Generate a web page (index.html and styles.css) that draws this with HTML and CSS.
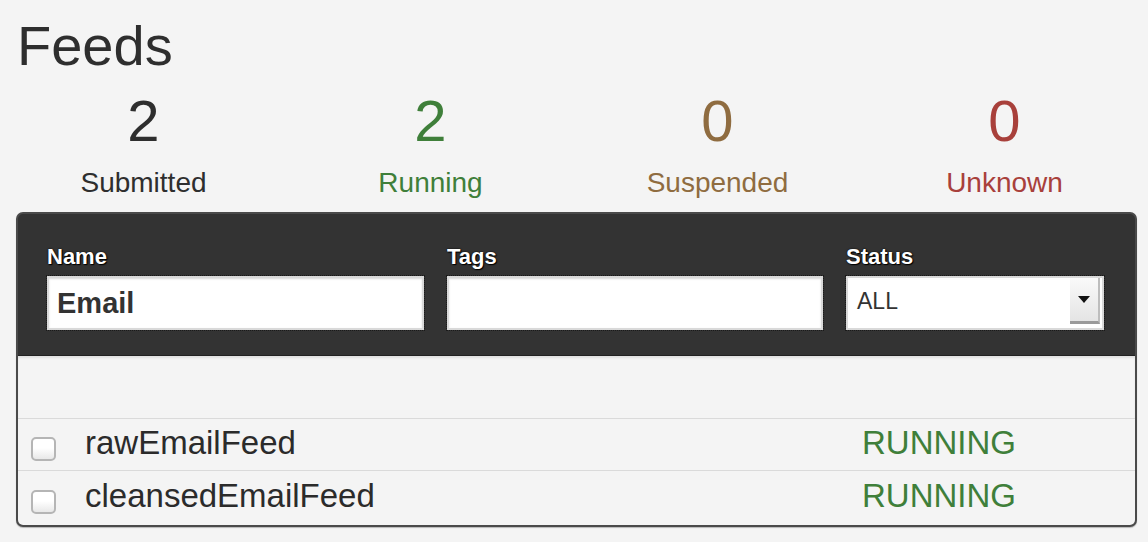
FILE: index.html
```html
<!DOCTYPE html>
<html lang="en">

<head>
	<title>Feeds</title>
	<meta charset="utf-8">
	<link rel="stylesheet" href="styles.css">
</head>

<body>
	<div class="page">
		<h1>Feeds</h1>

		<div class="stats">
			<div class="stat submitted">
				<div class="stat-num">2</div>
				<div class="stat-label">Submitted</div>
			</div>
			<div class="stat running">
				<div class="stat-num">2</div>
				<div class="stat-label">Running</div>
			</div>
			<div class="stat suspended">
				<div class="stat-num">0</div>
				<div class="stat-label">Suspended</div>
			</div>
			<div class="stat unknown">
				<div class="stat-num">0</div>
				<div class="stat-label">Unknown</div>
			</div>
		</div>

		<div class="panel">
			<div class="filters">
				<div class="field">
					<label>Name</label>
					<input class="text-input name-input" type="text" value="Email">
				</div>
				<div class="field">
					<label>Tags</label>
					<input class="text-input" type="text" value="">
				</div>
				<div class="field">
					<label>Status</label>
					<div class="select">
						<span class="select-value">ALL</span>
						<span class="select-arrow"></span>
					</div>
				</div>
			</div>

			<div class="list">
				<div class="list-head"></div>
				<div class="row">
					<span class="check"></span>
					<span class="feed-name">rawEmailFeed</span>
					<span class="feed-status">RUNNING</span>
				</div>
				<div class="row">
					<span class="check"></span>
					<span class="feed-name">cleansedEmailFeed</span>
					<span class="feed-status">RUNNING</span>
				</div>
			</div>
		</div>
	</div>
</body>
</html>
```

FILE: styles.css
```css
* {
	margin: 0;
	box-sizing: border-box;
}

body {
	font-family: 'Liberation Sans', Arial, sans-serif;
	background: #f4f4f4;
	color: #333;
	width: 1148px;
	height: 542px;
	overflow: hidden;
}

.page {
	padding: 0 11px 0 16px;
}

h1 {
	font-size: 56px;
	line-height: 56px;
	font-weight: normal;
	color: #2e2e2e;
	margin-top: 18px;
	margin-left: 1px;
}

.stats {
	display: grid;
	grid-template-columns: repeat(4, 1fr);
	margin: 18px -11px 0 -16px;
	text-align: center;
}

.stat-num {
	font-size: 58px;
	line-height: 58px;
}

.stat-label {
	font-size: 28px;
	line-height: 28px;
	margin-top: 19px;
}

.submitted { color: #2e2e2e; }
.running { color: #3f7f3a; }
.suspended { color: #8f6c40; }
.unknown { color: #a8403b; }

.panel {
	margin-top: 15px;
	width: 1121px;
	border: 2px solid #4a4a4a;
	border-radius: 7px;
	background: #333;
	overflow: hidden;
	box-shadow: 0 1px 1px rgba(0, 0, 0, 0.25);
}

.filters {
	display: grid;
	grid-template-columns: 377px 376px 258px;
	column-gap: 23px;
	padding: 32px 0 25px 29px;
}

.field label {
	display: block;
	font-size: 22px;
	line-height: 22px;
	font-weight: bold;
	color: #fff;
	text-shadow: 0 0 2px #000, 1px 1px 1px #000;
	margin-bottom: 8px;
}

.text-input {
	display: block;
	width: 100%;
	height: 54px;
	border: 2px solid #d9d9d9;
	outline: 1px dotted #1a1a1a;
	background: #fff;
	box-shadow: inset 0 1px 2px rgba(0, 0, 0, 0.15);
	padding: 0 8px;
	font-family: 'Liberation Sans', Arial, sans-serif;
	font-size: 29px;
	color: #333;
}

.name-input {
	font-weight: bold;
}

.select {
	display: flex;
	align-items: center;
	height: 54px;
	border: 2px solid #d9d9d9;
	outline: 1px dotted #1a1a1a;
	background: #fff;
}

.select-value {
	flex: 1;
	padding-left: 9px;
	font-size: 23px;
	margin-top: -3px;
	color: #333;
}

.select-arrow {
	display: flex;
	align-items: center;
	justify-content: center;
	width: 30px;
	height: 46px;
	margin-right: 2px;
	margin-top: -4px;
	background: linear-gradient(#fafafa, #e4e4e4);
	border-bottom: 3px solid #9a9a9a;
	border-right: 2px solid #bdbdbd;
}

.select-arrow::after {
	content: '';
	border-left: 6px solid transparent;
	border-right: 6px solid transparent;
	border-top: 7px solid #111;
}

.list {
	background: #f4f4f4;
	border-top: 1px solid #222;
}

.list-head {
	height: 63px;
	border-bottom: 1px solid #dadada;
	box-shadow: inset 0 2px 2px rgba(0, 0, 0, 0.08);
}

.row {
	display: grid;
	grid-template-columns: 67px 777px 1fr;
	align-items: center;
	height: 52px;
	border-bottom: 1px solid #dadada;
}

.row:last-child {
	border-bottom: none;
	height: 54px;
}

.check {
	display: block;
	width: 25px;
	height: 24px;
	margin: 8px 0 0 13px;
	border: 2px solid #b5b5b5;
	border-radius: 5px;
	background: linear-gradient(#fff, #fff 45%, #e8e8e8);
}

.feed-name {
	font-size: 33px;
	color: #2b2b2b;
	margin-top: -4px;
}

.feed-status {
	font-size: 33px;
	color: #3f7f3a;
	margin-top: -4px;
}
```
